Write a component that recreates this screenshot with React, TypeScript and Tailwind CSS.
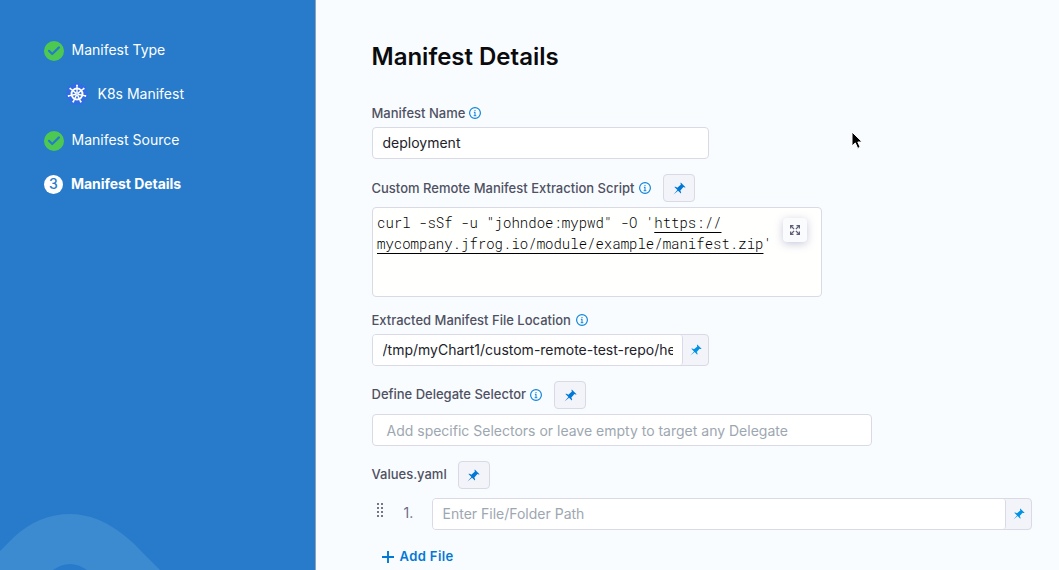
import React from "react";

function InfoIcon() {
  return (
    <svg className="ml-1 size-3 shrink-0" viewBox="0 0 12 12" fill="none">
      <circle cx="6" cy="6" r="5.4" stroke="#0b83db" strokeWidth="1.15" />
      <path d="M6 5v3.4M4.9 5.3H6M4.7 8.7h2.6M6 3v1.2" stroke="#0b83db" strokeWidth="1" />
    </svg>
  );
}

function PinIcon({ className }: { className: string }) {
  return (
    <svg className={className} viewBox="0 0 16 16" fill="currentColor">
      <path d="M9.6.6c-.5.6-.4 1.6.15 2.6L5.3 7C3.9 5.900 2.500 5.600 1.800 6.200l3.600 3.700L.6 15.400 6.200 10.700l3.500 3.500c.6-.6.3-2-.8-3.400l3.900-4.500c1 .5 2 .6 2.600.1z" />
    </svg>
  );
}

function PinButton() {
  return (
    <button className="ml-3 flex h-7 w-8 items-center justify-center rounded border border-[#d9dae6] bg-[#f3f3fa] text-[#0278d5]">
      <PinIcon className="size-[13px]" />
    </button>
  );
}

function PinAddon() {
  return (
    <button className="flex flex-1 items-center justify-center text-[#0092e4]">
      <PinIcon className="size-3" />
    </button>
  );
}

function CheckIcon() {
  return (
    <svg className="size-5" viewBox="0 0 20 20" fill="none">
      <circle cx="10" cy="10" r="10" fill="#4dc952" />
      <path d="M5 9.800l3.200 3.200 6.800-6.600" stroke="#277bca" strokeWidth="2.200" strokeLinecap="round" strokeLinejoin="round" />
    </svg>
  );
}

const spokes = [0, 1, 2, 3, 4, 5, 6].map((n) => (n * 360) / 7);

function KubernetesIcon() {
  return (
    <svg className="h-6 w-[22px]" viewBox="0 0 22 24" fill="none" stroke="#fff">
      <path d="M11 1.200L19.300 5.100 21.300 14.100 15.600 21.800H6.400L.7 14.100 2.700 5.100z" fill="#326ce5" stroke="#326ce5" strokeWidth="1.400" strokeLinejoin="round" />
      <circle cx="11" cy="12" r="5.500" strokeWidth="1.900" />
      {spokes.map((a) => (
        <g key={a} transform={`rotate(${a} 11 12)`}>
          <path d="M11 11V3.300" strokeWidth="1.400" />
          <path d="M10.100 3.300h1.800" strokeWidth="1.300" />
        </g>
      ))}
      <circle cx="11" cy="12" r="1.500" fill="#fff" stroke="none" />
      <circle cx="11" cy="12" r=".6" fill="#326ce5" stroke="none" />
    </svg>
  );
}

function ExpandIcon() {
  return (
    <svg className="h-[10px] w-[10px]" viewBox="0 0 10 10" fill="none" stroke="#5f6078" strokeWidth="1.300">
      <path d="M.6 3.500V.6h2.900M6.500.6h2.900v2.900M9.400 6.500v2.900H6.500M3.500 9.400H.6V6.500" />
      <path d="M.8.8l3.300 3.300M9.200.8L5.900 4.100M9.200 9.200L5.900 5.900M.8 9.200l3.300-3.300" />
    </svg>
  );
}

function DragHandle() {
  return (
    <svg className="mt-[5px] h-[14px] w-[6px]" viewBox="0 0 6 14" fill="#75768b">
      {[0, 4, 8, 12].map((y) => (
        <g key={y}>
          <rect x="0" y={y} width="2" height="2" />
          <rect x="4" y={y} width="2" height="2" />
        </g>
      ))}
    </svg>
  );
}

function Label({ children }: { children: React.ReactNode }) {
  return <label className="-ml-[0.5px] text-[13px] leading-4 font-medium whitespace-nowrap text-[#4f5162]">{children}</label>;
}

function Sidebar() {
  return (
    <aside className="relative w-[316px] shrink-0 overflow-hidden border-r border-[#8fa3b8] bg-[#277bca] pl-11 text-[14px] leading-5 text-white">
      <svg className="absolute bottom-0 left-0 h-[60px] w-[170px]" viewBox="0 0 170 60">
        <path fillRule="evenodd" d="M0 65V41L14 27Q39 4 70 4Q98 4 125 26Q134 33 142 42L165 65H0zM48 64Q59 54 70 54Q81 54 92 64z" fill="#3c8acf" />
      </svg>
      <ol>
        <li className="mt-[41px] flex h-5 items-center">
          <CheckIcon />
          <span className="-mt-0.5 ml-[7.5px]">Manifest Type</span>
        </li>
        <li className="mt-[21px] ml-[22px] flex h-6 items-center">
          <KubernetesIcon />
          <span className="ml-[9.5px]">K8s Manifest</span>
        </li>
        <li className="mt-[25px] flex h-5 items-center">
          <CheckIcon />
          <span className="-mt-0.5 ml-[7.5px]">Manifest Source</span>
        </li>
        <li className="mt-[23px] flex h-5 items-center font-bold">
          <span className="flex size-[19px] items-center justify-center rounded-full bg-white text-[14px] font-medium text-[#277bca]">3</span>
          <span className="ml-2 tracking-[-0.04px]">Manifest Details</span>
        </li>
      </ol>
    </aside>
  );
}

export default function App() {
  return (
    <div className="flex h-[570px] w-[1059px] overflow-hidden bg-[#f9fcff] font-['Inter',sans-serif]">
      <Sidebar />
      <main className="relative flex-1 pl-14">
        <h1 className="mt-[41px] -ml-[0.5px] text-2xl leading-8 font-semibold text-[#0b0b0d]">Manifest Details</h1>

        <div className="mt-8 flex h-4 items-center">
          <Label>Manifest Name</Label>
          <InfoIcon />
        </div>
        <div className="mt-1.5 flex h-8 w-[337px] items-center rounded border border-[#d9dae6] bg-white px-[9.5px] pb-px text-[14px] text-[#22222a]">deployment</div>

        <div className="mt-[15px] flex h-7 items-center">
          <span className="mr-px flex">
            <Label>Custom Remote Manifest Extraction Script</Label>
          </span>
          <InfoIcon />
          <PinButton />
        </div>
        <div className="mt-[5px] flex h-[90px] w-[450px] justify-between rounded border border-[#d9dae6] bg-[#fffffe] pt-1 pr-[14px] pl-1">
          <code className="font-['Roboto_Mono','Liberation_Mono',monospace] text-[14px] leading-[21px] font-light whitespace-nowrap text-black">
            curl -sSf -u "johndoe:mypwd" -O '
            <span className="underline underline-offset-4">https://</span>
            <br />
            <span className="underline underline-offset-4">mycompany.jfrog.io/module/example/manifest.zip</span>'
          </code>
          <button className="mt-1.5 flex size-6 shrink-0 items-center justify-center rounded-sm bg-[#fafbfc] shadow-[0_2px_8px_rgba(96,97,160,0.35)]">
            <ExpandIcon />
          </button>
        </div>

        <div className="mt-[15px] flex h-4 items-center">
          <span className="mr-px flex">
            <Label>Extracted Manifest File Location</Label>
          </span>
          <InfoIcon />
        </div>
        <div className="mt-1.5 flex h-8 w-[337px] rounded border border-[#d9dae6] bg-[#f3f3fa]">
          <div className="flex w-[310px] shrink-0 items-center rounded-[3px] border-r border-[#d9dae6] bg-white pr-[9px] pb-px pl-[9.5px] text-[14px] text-[#22222a]">
            <span className="overflow-hidden whitespace-nowrap">/tmp/myChart1/custom-remote-test-repo/helm</span>
          </div>
          <PinAddon />
        </div>

        <div className="mt-[15px] flex h-7 items-center">
          <span className="flex pb-0.5">
            <Label>Define Delegate Selector</Label>
          </span>
          <InfoIcon />
          <PinButton />
        </div>
        <div className="mt-[5px] flex h-8 w-[500px] items-center rounded border border-[#d9dae6] bg-white px-[13.5px] pt-px text-[14px] text-[#9da7b1]">
          Add specific Selectors or leave empty to target any Delegate
        </div>

        <div className="mt-[15px] flex h-7 items-center">
          <span className="-mr-px flex pb-0.5">
            <Label>Values.yaml</Label>
          </span>
          <PinButton />
        </div>
        <div className="mt-[9px] flex h-8 pl-[5px]">
          <DragHandle />
          <span className="ml-[20.5px] w-[28.5px] text-[14px] leading-[30px] text-[#6b6d85]">1.</span>
          <div className="flex h-8 w-[600px] rounded border border-[#d9dae6] bg-[#f3f3fa]">
            <div className="flex w-[573px] shrink-0 items-center rounded-[3px] border-r border-[#d9dae6] bg-white pb-px pl-[9.5px] text-[14px] text-[#9da7b1]">Enter File/Folder Path</div>
            <PinAddon />
          </div>
        </div>

        <button className="mt-[17px] ml-[10px] flex h-5 items-center text-[13px] font-semibold tracking-[0.4px] text-[#0278d5]">
          <svg className="size-3" viewBox="0 0 12 12" stroke="currentColor" strokeWidth="1.900">
            <path d="M6 0v12M0 6h12" />
          </svg>
          <span className="ml-[5.5px]">Add File</span>
        </button>

        <svg className="absolute top-[131px] left-[535px] h-[20px] w-[13px]" viewBox="0 0 13 20">
          <path d="M1 1v14l3.300-3.100 2.400 5.500 2.500-1.100-2.400-5.300h4.400z" fill="#000" stroke="#fff" strokeWidth="1" />
        </svg>
      </main>
    </div>
  );
}
